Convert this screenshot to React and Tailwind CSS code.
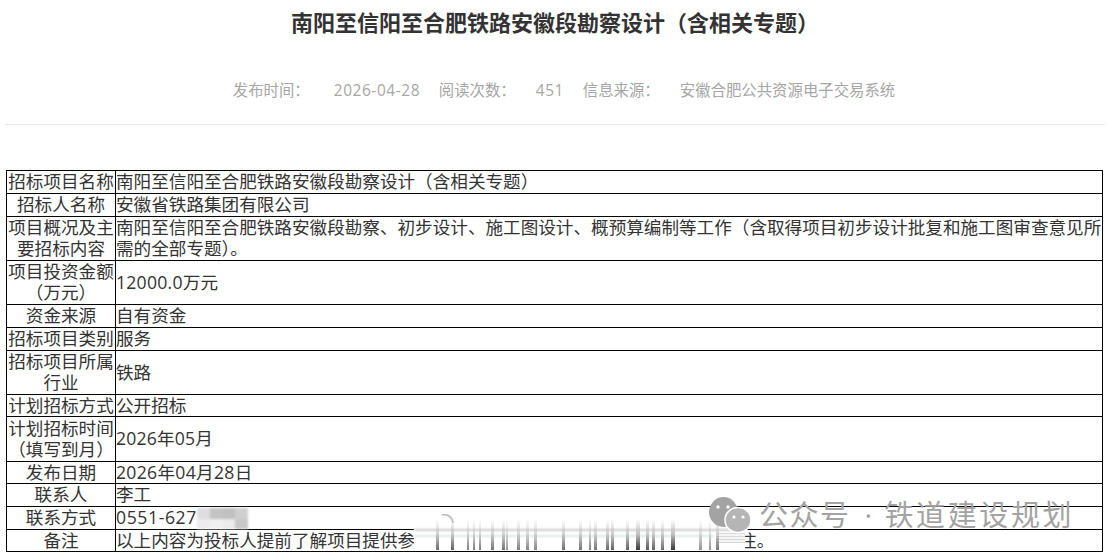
const FONT = "font-['Open_Sans','Noto_Sans_CJK_SC',sans-serif]";

const rows = [
  ["招标项目名称", "南阳至信阳至合肥铁路安徽段勘察设计（含相关专题）", "h-[23px]", "", "pb-[1px]"],
  ["招标人名称", "安徽省铁路集团有限公司", "h-[23px]", "", "pb-[1px]"],
  ["项目概况及主要招标内容", "南阳至信阳至合肥铁路安徽段勘察、初步设计、施工图设计、概预算编制等工作（含取得项目初步设计批复和施工图审查意见所需的全部专题）。", "h-[44px]", "", "pb-[1px]"],
  ["项目投资金额（万元）", "12000.0万元", "h-[44px]", "tracking-[0.25px]", "pb-[1px]"],
  ["资金来源", "自有资金", "h-[23px]", "", "pb-[1px]"],
  ["招标项目类别", "服务", "h-[23px]", "", "pb-[1px]"],
  ["招标项目所属行业", "铁路", "h-[44px]", "", "pb-[1px]"],
  ["计划招标方式", "公开招标", "h-[22px]", "", ""],
  ["计划招标时间（填写到月）", "2026年05月", "h-[45px]", "tracking-[0.2px]", "pb-[1px]"],
  ["发布日期", "2026年04月28日", "h-[22px]", "tracking-[0.3px]", ""],
  ["联系人", "李工", "h-[23px]", "", "pb-[1px]"],
  ["联系方式", "0551-627", "h-[23px]", "tracking-[0.6px]", "pb-[1px]"],
  ["备注", "以上内容为投标人提前了解项目提供参", "h-[22px]", "", ""],
];

// x, width, opacity
const smearBars = [
  [436, 3, 75], [451, 3, 80], [467, 2, 65], [473, 2, 65], [479, 2, 65], [491, 3, 70], [502, 3, 70], [506, 2, 55],
  [517, 3, 65], [526, 3, 60], [534, 3, 60], [562, 3, 75], [579, 3, 70], [589, 2, 65], [594, 3, 70],
  [606, 3, 75], [611, 3, 80], [626, 3, 80], [636, 4, 100], [646, 3, 85], [652, 3, 80], [661, 3, 75],
  [671, 4, 100], [699, 3, 55], [709, 2, 55], [716, 3, 70],
];

export default function App() {
  return (
    <div className={`${FONT} relative w-[1110px] h-[559px] overflow-hidden bg-white`}>
      <header className="h-[125px] mx-[5px] border-b border-[#e8e8e8] flex flex-col items-center">
        <h1 className="mt-[7px] text-[22px] leading-[30px] font-bold text-[#333333]">
          南阳至信阳至合肥铁路安徽段勘察设计（含相关专题）
        </h1>
        <p className="mt-[44px] pl-[18px] flex text-[15.4px] leading-[20px] text-[#a6a6a6] whitespace-nowrap">
          <span className="w-[101px]">发布时间：</span>
          <span className="w-[105px] tracking-[0.6px]">2026-04-28</span>
          <span className="w-[97px]">阅读次数：</span>
          <span className="w-[47px] tracking-[0.6px]">451</span>
          <span className="w-[97px]">信息来源：</span>
          <span>安徽合肥公共资源电子交易系统</span>
        </p>
      </header>

      <table className="mt-[45px] ml-[6px] w-[1097px] table-fixed border-collapse border border-black text-[17.6px] leading-[21px] text-[#333333]">
        <colgroup>
          <col className="w-[109px]" />
          <col />
        </colgroup>
        <tbody>
          {rows.map(([k, v, h, t, pb]) => (
            <tr key={k} className={h}>
              <td className={`border border-black p-0 text-center align-middle ${pb}`}>{k}</td>
              <td className={`border border-black p-0 align-middle ${t} ${pb}`}>
                {k === "备注" ? (
                  <span>{v}<span className="ml-[324px]">注。</span></span>
                ) : v}
              </td>
            </tr>
          ))}
        </tbody>
      </table>

      {/* blurred phone digits */}
      <div className="absolute left-[197px] top-[508px] w-[51px] h-[21px] grid grid-cols-4 grid-rows-2 blur-[1px]">
        <div className="bg-[#dddddd]" /><div className="bg-[#c4c4c4]" /><div className="bg-[#c0c0c0]" /><div className="bg-[#cfcfcf]" />
        <div className="bg-[#ececec]" /><div className="bg-[#f0f0f0]" /><div className="bg-[#ebebeb]" /><div className="bg-[#c8c8c8]" />
      </div>

      {/* smeared remark text */}
      <div className="absolute left-[414px] top-[516px] w-[331px] h-[34px] bg-white" />
      <div className="absolute left-[414px] top-[529px] w-[331px] h-[2px] bg-[#c8c8c8] blur-[1px]" />
      <div className="absolute left-[414px] top-[535px] w-[300px] h-[2px] bg-[#dbe6e6] blur-[1px]" />
      <div className="absolute left-[716px] top-[533px] w-[29px] h-[10px] bg-[repeating-linear-gradient(180deg,#d8d8d8_0,#d8d8d8_1px,#f5f5f5_1px,#f5f5f5_3px)]" />
      {smearBars.map(([x, w, o]) => (
        <div
          key={x}
          className="absolute top-[519px] h-[31px] bg-gradient-to-b from-transparent via-[#c0c0c0] to-[#3a3a3a] blur-[0.7px]"
          style={{ left: x, width: w, opacity: o / 100 }}
        />
      ))}
      <svg className="absolute left-[440px] top-[513px]" width="16" height="12" viewBox="0 0 16 12">
        <path d="M2 2 C7 1 12 3 13 10" fill="none" stroke="#b8b8b8" strokeWidth="1.5" />
      </svg>

      {/* watermark */}
      <div className="absolute left-[709px] top-[497px] flex items-start text-[#a3a3a3]">
        <svg width="43" height="40" viewBox="0 0 43 40">
          <ellipse cx="14.5" cy="15" rx="14.5" ry="15" fill="#a3a3a3" />
          <circle cx="9" cy="10" r="1.7" fill="#ffffff" />
          <circle cx="19" cy="10" r="1.7" fill="#ffffff" />
          <ellipse cx="29" cy="23" rx="13" ry="12.5" fill="#b5b5b5" stroke="#ffffff" strokeWidth="1.5" />
          <circle cx="25" cy="20" r="1.6" fill="#ffffff" />
          <circle cx="34" cy="20" r="1.6" fill="#ffffff" />
        </svg>
        <div className="ml-[7px] mt-[3px] flex text-[29px] leading-[30px] whitespace-nowrap">
          <span className="tracking-[1.5px]">公众号</span>
          <span className="ml-[14px] w-[20px]">·</span>
          <span className="tracking-[2.6px]">铁道建设规划</span>
        </div>
      </div>
    </div>
  );
}
